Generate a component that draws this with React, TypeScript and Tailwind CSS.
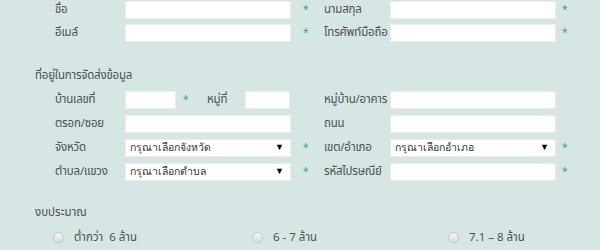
const Star = ({ className = "" }: { className?: string }) => (
  <span className={`text-[#3a9e9e] text-[10px] leading-none ${className}`}>*</span>
);

const Input = ({ w }: { w: string }) => (
  <div className={`${w} h-[18px] bg-white border border-[#ececec] shrink-0`} />
);

const Select = ({ text }: { text: string }) => (
  <div className="w-[166px] h-[18px] shrink-0 bg-white border border-[#ececec] flex items-center justify-between pl-[4px] pr-[6px]">
    <span className="text-[10.5px] text-[#333] leading-none whitespace-nowrap font-['Liberation_Sans',sans-serif]">
      {text}
    </span>
    <span className="text-[9px] text-black leading-none">▼</span>
  </div>
);

const Label = ({ children, w }: { children: React.ReactNode; w: string }) => (
  <div className={`${w} shrink-0 text-[11.5px] tracking-[-0.2px] text-[#505050] leading-none whitespace-nowrap`}>
    {children}
  </div>
);

const Radio = ({ label, className = "" }: { label: string; className?: string }) => (
  <div className={`flex items-center ${className}`}>
    <span className="w-[11px] h-[11px] shrink-0 rounded-full border border-[#c4c4c4] bg-gradient-to-b from-[#f4f4f4] to-[#dcdcdc]" />
    <span className="ml-[10px] text-[11.5px] text-[#505050] leading-none whitespace-pre">{label}</span>
  </div>
);

const App = () => {
  return (
    <div className="w-[600px] h-[250px] overflow-hidden bg-[#d5e6e5] font-['Noto_Sans_Thai','Noto_Sans',sans-serif]">
      <div className="pt-[1px] pl-[55px]">
        <div className="flex items-center h-[18px]">
          <Label w="w-[70px]">ชื่อ</Label>
          <Input w="w-[166px]" />
          <Star className="ml-[12px] w-[21px]" />
          <Label w="w-[66px]">นามสกุล</Label>
          <Input w="w-[166px]" />
          <Star className="ml-[6px]" />
        </div>
        <div className="flex items-center h-[18px] mt-[5px]">
          <Label w="w-[70px]">อีเมล์</Label>
          <Input w="w-[166px]" />
          <Star className="ml-[12px] w-[21px]" />
          <Label w="w-[66px]">โทรศัพท์มือถือ</Label>
          <Input w="w-[166px]" />
          <Star className="ml-[6px]" />
        </div>
      </div>

      <div className="pl-[35px] mt-[28px] text-[11.5px] tracking-[-0.2px] text-[#505050] leading-none">
        ที่อยู่ในการจัดส่งข้อมูล
      </div>

      <div className="pl-[55px] mt-[9px]">
        <div className="flex items-center h-[18px]">
          <Label w="w-[70px]">บ้านเลขที่</Label>
          <Input w="w-[51px]" />
          <Star className="ml-[7px] w-[24px]" />
          <Label w="w-[38px]">หมู่ที่</Label>
          <Input w="w-[45px]" />
          <div className="w-[34px] shrink-0" />
          <Label w="w-[66px]">หมู่บ้าน/อาคาร</Label>
          <Input w="w-[166px]" />
        </div>
        <div className="flex items-center h-[18px] mt-[6px]">
          <Label w="w-[70px]">ตรอก/ซอย</Label>
          <Input w="w-[166px]" />
          <div className="w-[33px] shrink-0" />
          <Label w="w-[66px]">ถนน</Label>
          <Input w="w-[166px]" />
        </div>
        <div className="flex items-center h-[18px] mt-[6px]">
          <Label w="w-[70px]">จังหวัด</Label>
          <Select text="กรุณาเลือกจังหวัด" />
          <Star className="ml-[12px] w-[21px]" />
          <Label w="w-[66px]">เขต/อำเภอ</Label>
          <Select text="กรุณาเลือกอำเภอ" />
          <Star className="ml-[6px]" />
        </div>
        <div className="flex items-center h-[18px] mt-[6px]">
          <Label w="w-[70px]">ตำบล/แขวง</Label>
          <Select text="กรุณาเลือกตำบล" />
          <Star className="ml-[12px] w-[21px]" />
          <Label w="w-[66px]">รหัสไปรษณีย์</Label>
          <Input w="w-[166px]" />
          <Star className="ml-[6px]" />
        </div>
      </div>

      <div className="pl-[35px] mt-[26px] text-[11.5px] text-[#505050] leading-none">งบประมาณ</div>

      <div className="flex items-center pl-[53px] mt-[14px]">
        <Radio label="ต่ำกว่า  6 ล้าน" className="w-[199px]" />
        <Radio label="6 - 7 ล้าน" className="w-[196px]" />
        <Radio label="7.1 – 8 ล้าน" />
      </div>
    </div>
  );
};

export default App;
